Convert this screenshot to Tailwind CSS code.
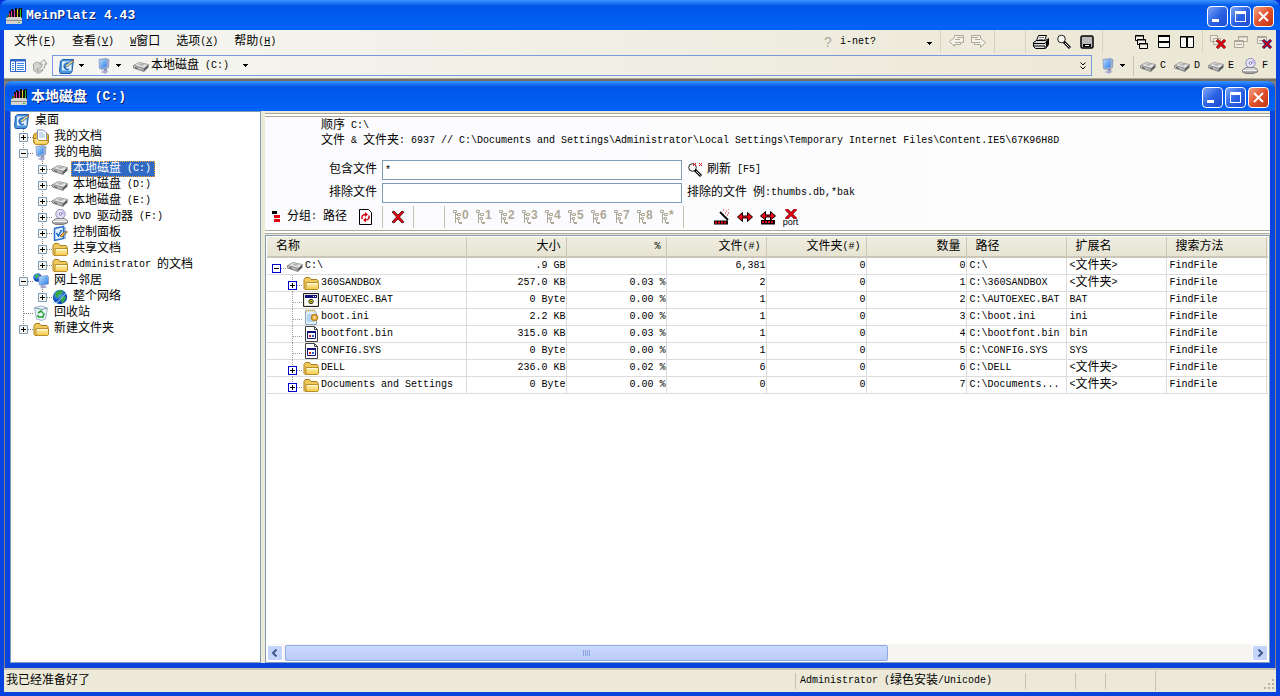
<!DOCTYPE html>
<html lang="zh-CN">
<head>
<meta charset="utf-8">
<title>MeinPlatz 4.43</title>
<script src="https://cdn.jsdelivr.net/npm/@tailwindcss/browser@4"></script>
</head>
<body class="min-h-screen bg-[#0831d9] font-['Liberation_Mono','Noto_Sans_CJK_SC',monospace] text-[10px] leading-4 text-black">
<svg class="absolute size-0" aria-hidden="true">
  <defs>
    <linearGradient id="gFolder" x1="0" y1="0" x2="0" y2="1"><stop offset="0" stop-color="#fff6b8"/><stop offset="1" stop-color="#f3c64a"/></linearGradient>
    <linearGradient id="gDrive" x1="0" y1="0" x2="0" y2="1"><stop offset="0" stop-color="#f2f2f2"/><stop offset="1" stop-color="#8a8a8a"/></linearGradient>
    <linearGradient id="gScreen" x1="0" y1="0" x2="1" y2="1"><stop offset="0" stop-color="#b9e2ff"/><stop offset="1" stop-color="#2878e8"/></linearGradient>
    <radialGradient id="gGlobe" cx=".4" cy=".3"><stop offset="0" stop-color="#6cc0ff"/><stop offset="1" stop-color="#0a48b8"/></radialGradient>
  </defs>
  <symbol id="app" viewBox="0 0 16 16"><path d="M1 7h2V3h2V1h2v1h2V0h2v1h2V0h3v10H1z" fill="#101010"/><path d="M2 7v4M14.500 1v9" stroke="#30c030"/><path d="M5.500 3v8M8.500 2v9" stroke="#e03aa8"/><path d="M11.500 1v10" stroke="#e8d020"/><path d="M3.500 5v6" stroke="#d83030"/><path d="M0 10l3-1h12l1 2v4l-1 1H0z" fill="#d4d4d0"/><path d="M0 12.500h16" stroke="#8c8c88"/><path d="M12 14h2v1h-2z" fill="#35b035"/></symbol>
  <symbol id="folder" viewBox="0 0 16 16"><path d="M1 4.500l1.500-2h4l1.500 2h6l1 1v8l-1 1H2l-1-1z" fill="#f0c95c" stroke="#a87e1c"/><path d="M3 7.500h12.500v6l-1 1H3z" fill="url(#gFolder)" stroke="#b98e28"/><path d="M4 8.500h10" stroke="#fffbe0"/></symbol>
  <symbol id="docs" viewBox="0 0 16 16"><path d="M.5 6l2-2h11l2 2v7l-2 2.500h-11l-2-2z" fill="#e8b838" stroke="#a87e1c"/><path d="M4.500 1h6l3 3v8h-9z" fill="#fff" stroke="#7890c0"/><path d="M6 4h4M6 6h6M6 8h6" stroke="#90b4e8"/><path d="M1 9.500h3l1.500 2H15v2l-1.500 2h-11L1 13z" fill="url(#gFolder)" stroke="#b98e28"/></symbol>
  <symbol id="drive" viewBox="0 0 16 16"><path d="M.5 7.500L6 4.500l9.500 2-4.500 4z" fill="#e4e4e4" stroke="#a0a0a0"/><path d="M.5 7.500l10.500 3v3L.5 10z" fill="url(#gDrive)" stroke="#8a8a8a"/><path d="M11 10.500l4.500-4v3l-4.500 4z" fill="#5e5e5e"/><path d="M5 6.500l3-1 4 1-3 1.500z" fill="#b4b4b4"/><path d="M2 9.500l3 1" stroke="#444"/></symbol>
  <symbol id="dvd" viewBox="0 0 16 16"><circle cx="8.500" cy="5" r="4.700" fill="#e4e2f6" stroke="#8e8eb0"/><path d="M8.500 5l3-3.500a4.500 4.500 0 0 1 1.500 4z" fill="#c8b4f0"/><circle cx="8.500" cy="5" r="1.300" fill="#fff" stroke="#8080b0"/><path d="M.5 12L4 9.500h8.500l3 2V14L11 15.500H3.500l-3-1.500z" fill="url(#gDrive)" stroke="#808080"/><path d="M1 12.500h14" stroke="#f6f6f6"/></symbol>
  <symbol id="pc" viewBox="0 0 16 16"><path d="M3 1.500l7-1 3 1-.5 8L6 11.500l-2.500-1z" fill="#9fb0d0" stroke="#8090c0" stroke-width=".7"/><path d="M3.500 2.500l7-1.200v7.500l-6 1.700z" fill="url(#gScreen)"/><path d="M8 11l3-1 .5 2.500-4 1z" fill="#8a90b8"/><path d="M4.500 14l4-1.500 4 1-3 2.200z" fill="#a9a9cf"/></symbol>
  <symbol id="desk" viewBox="0 0 16 16"><path d="M1.500 3l2-1.500h11L13 13.500l-1.500 2h-10l-1-2z" fill="#4a97dc" stroke="#1f5cae"/><path d="M3 3.500h9.500v9H3z" fill="#e4f2ff"/><path d="M10 5.500A3.200 3.200 0 1 0 10 11" fill="none" stroke="#1f6cc4" stroke-width="1.400"/><path d="M6 9.500l1-2.500 6-4.500 1.500 1.500-6 4.500z" fill="#ffe07a" stroke="#1c5cb0" stroke-width=".8"/><path d="M13 2.500l2-.5v2z" fill="#e84018"/></symbol>
  <symbol id="panel" viewBox="0 0 16 16"><path d="M2.500 3.500l9-2v12l-9 2z" fill="#e6f3ff" stroke="#2b6fca" stroke-width="1.500"/><path d="M4.500 8l2 3 3-6" fill="none" stroke="#1464c8" stroke-width="1.500"/><path d="M8 11l5-5 2.500 1L10 12z" fill="#f2b030" stroke="#7a4a10" stroke-width=".7"/><path d="M13 2v12" stroke="#4a86d4"/></symbol>
  <symbol id="net" viewBox="0 0 16 16"><circle cx="4.500" cy="4.500" r="4.200" fill="url(#gGlobe)"/><path d="M2 2l3-1 1 2-3 3z" fill="#3db44a"/><path d="M6 3.500l8.500-1L15.500 4v7L8 12.500l-2-1z" fill="url(#gScreen)" stroke="#8c9cc8" stroke-width=".8"/><path d="M9 12.500h3l2 2-5 1-2-1.500z" fill="#a4a4cc"/></symbol>
  <symbol id="globe" viewBox="0 0 16 16"><circle cx="8" cy="8" r="7.200" fill="url(#gGlobe)"/><path d="M4 3l4-2 3 1-1 3-3 1-1 3-3-2zM9 8l4-1 1 2-3 5-2-1z" fill="#35a845"/><path d="M1 14l5-1 8-9" stroke="#9fd4ff" fill="none"/></symbol>
  <symbol id="bin" viewBox="0 0 16 16"><path d="M1.500 2.500l7-1.500 6 2-2 11-4 1.500-5-1.500z" fill="#e9f3f6" stroke="#9cb4c4"/><path d="M2 3l7 1.500 5-1.500" fill="none" stroke="#7898b0"/><path d="M5 8l3-2 2 2M11 8l-1 4H8M4.500 10l1 2H8" fill="none" stroke="#25a035" stroke-width="1.600"/></symbol>
  <symbol id="bat" viewBox="0 0 16 16"><path d="M.5 1.500h15v13H.5z" fill="#e6e3d6" stroke="#202020"/><path d="M2 3h12v3H2z" fill="#10107c"/><path d="M10 4.500h3" stroke="#fff" stroke-dasharray="1 1"/><path d="M2 6h12v7H2z" fill="#fff"/><circle cx="8" cy="9.500" r="2.200" fill="#e8d820" stroke="#303030"/><circle cx="8" cy="9.500" r=".7"/></symbol>
  <symbol id="ini" viewBox="0 0 16 16"><path d="M2.500 1.500h9l2 3v11h-11z" fill="#dff0fc" stroke="#8ea8b8"/><path d="M3 1.500h9" stroke="#e8c050" stroke-width="2" stroke-dasharray="1 1"/><path d="M4 6h5M4 8h4M4 10h5M4 12h7" stroke="#86b8e0"/><circle cx="11.500" cy="8.500" r="3.200" fill="#f0b040" stroke="#a86a10"/><circle cx="11.500" cy="8.500" r="1" fill="#fff2c0"/></symbol>
  <symbol id="sys" viewBox="0 0 16 16"><path d="M2.500.5h9l3 3v12h-12z" fill="#fff" stroke="#404040"/><path d="M11.500.5v3h3" fill="none" stroke="#404040"/><path d="M4.500 5.500h8v7h-8z" fill="#fff" stroke="#10107c"/><path d="M4 6h9" stroke="#10107c" stroke-width="2"/><path d="M6 9h2v2H6z" fill="#d82020"/><path d="M9 9h2v2H9z" fill="#2060d8"/></symbol>
  <symbol id="cv" viewBox="0 0 19 16"><path d="M9.500 0v16" stroke="#808080" stroke-dasharray="1 1"/></symbol>
  <symbol id="ct" viewBox="0 0 19 16"><path d="M9.500 0v16M10 8.500h9" stroke="#808080" stroke-dasharray="1 1"/></symbol>
  <symbol id="ce" viewBox="0 0 19 16"><path d="M9.500 0v8M10 8.500h9" stroke="#808080" stroke-dasharray="1 1"/></symbol>
  <symbol id="bp" viewBox="0 0 19 16"><path d="M5.500 4.500h8v8h-8z" fill="#f6f4ec" stroke="#7b9ab8"/><path d="M7 8.500h5M9.500 6v5" stroke="#000"/></symbol>
  <symbol id="bm" viewBox="0 0 19 16"><path d="M5.500 4.500h8v8h-8z" fill="#f6f4ec" stroke="#7b9ab8"/><path d="M7 8.500h5" stroke="#000"/></symbol>
  <symbol id="gt" viewBox="0 0 16 17"><path d="M5.500 0v17M6 10.500h10" stroke="#a0a0a0" stroke-dasharray="1 1"/></symbol>
  <symbol id="gp" viewBox="0 0 16 17"><path d="M5.500 0v17M10 10.500h6" stroke="#a0a0a0" stroke-dasharray="1 1"/><rect x="1.500" y="6.500" width="8" height="8" fill="#fff" stroke="#0000d0"/><path d="M3 10.500h5M5.500 8v5" stroke="#000"/></symbol>
  <symbol id="gl" viewBox="0 0 16 17"><path d="M5.500 0v6M10 10.500h6" stroke="#a0a0a0" stroke-dasharray="1 1"/><rect x="1.500" y="6.500" width="8" height="8" fill="#fff" stroke="#0000d0"/><path d="M3 10.500h5M5.500 8v5" stroke="#000"/></symbol>
  <symbol id="gm" viewBox="0 0 16 17"><path d="M10 10.500h6" stroke="#a0a0a0" stroke-dasharray="1 1"/><rect x="1.500" y="6.500" width="8" height="8" fill="#fff" stroke="#0000d0"/><path d="M3 10.500h5" stroke="#000"/></symbol>
  <symbol id="down" viewBox="0 0 5 3"><path d="M0 0h5v1H4v1H3v1H2V2H1V1H0z"/></symbol>
  <symbol id="tr" viewBox="0 0 9 16"><path d="M2.500 1v13M3 5.500h2M3 9.500h2M5.500 11v2.500h2" stroke="#aca899" fill="none"/><path d="M.5 1.500h3v2h-3zM4.500 4.500h3v2h-3zM4.500 8.500h2v2h-2z" fill="#fff" stroke="#aca899"/><path d="M6 13h3v2H6z" fill="#aca899"/></symbol>
  <symbol id="cascade" viewBox="0 0 16 16" fill="#f4f2e8" stroke="#000"><path d="M2.500 1.500h8v5h-8z"/><path d="M2 2h9"/><path d="M4.500 5.500h8v5h-8z"/><path d="M4 6h9"/><path d="M6.500 9.500h8v5h-8z"/><path d="M6 10h9"/></symbol>
  <symbol id="gwin" viewBox="0 0 16 16"><path d="M5.500 2.500h9v5h-9zM1.500 6.500h9v7h-9z" fill="#f0eee2" stroke="#aca899"/><path d="M5 3h10M1 7.500h10M3 10.500h6" stroke="#aca899"/></symbol>
  <symbol id="redx" viewBox="0 0 16 16"><path d="M2 3l2-1 4 4 4-4 2 1-4.500 5L14 13l-2 1-4-4-4 4-2-1 4.500-5z" fill="#e00010" stroke="#300" stroke-width=".7"/></symbol>
</svg>

<div class="flex min-h-screen flex-col rounded-t-lg border-x-4 border-b-4 border-[#0a44de]">
  <header class="-mx-1 flex h-[30px] items-center justify-between rounded-t-lg bg-linear-to-b from-[#3a94ff] via-[#0056e8] via-20% to-[#0062f8] pr-1.5 pl-1.5 pt-0.5 text-white">
    <h1 class="flex items-center gap-1 text-[13px] font-bold [text-shadow:1px_1px_#0a1e6e]"><svg class="size-4"><use href="#app"/></svg>MeinPlatz 4.43</h1>
    <div class="flex gap-0.5">
      <button aria-label="最小化" class="flex size-[21px] items-end rounded-sm border border-white bg-linear-to-br from-[#7ea6f8] via-[#2c62e4] to-[#1c4cd0] p-1"><span class="h-[3px] w-[7px] bg-white"></span></button>
      <button aria-label="最大化" class="size-[21px] rounded-sm border border-white bg-linear-to-br from-[#7ea6f8] via-[#2c62e4] to-[#1c4cd0] p-1"><span class="block size-[11px] border border-t-[3px] border-white"></span></button>
      <button aria-label="关闭" class="size-[21px] rounded-sm border border-white bg-linear-to-br from-[#f0a080] via-[#e2502c] to-[#c03410] p-1"><svg class="size-[11px]" viewBox="0 0 11 11"><path d="M1 1l9 9M10 1l-9 9" stroke="#fff" stroke-width="2"/></svg></button>
    </div>
  </header>

  <div class="flex h-[23px] items-center justify-between bg-linear-to-r from-[#f6f6f3] to-[#ebe7d4]">
    <nav class="flex gap-4 pl-2.5">
      <button>文件(<u>F</u>)</button><button>查看(<u>V</u>)</button><button><u>W</u>窗口</button><button>选项(<u>X</u>)</button><button>帮助(<u>H</u>)</button>
    </nav>
    <div class="flex h-full items-center pr-px">
      <label for="inet" class="w-3 text-center font-['Liberation_Sans',sans-serif] text-[14px] text-[#aca899]">?</label>
      <div class="relative w-[102px]">
        <select id="inet" class="w-full appearance-none bg-transparent pl-1.5"><option>i-net?</option></select>
        <svg class="pointer-events-none absolute top-2 right-1 h-[3px] w-[5px]"><use href="#down"/></svg>
      </div>
      <span class="h-full w-2 bg-linear-to-r from-transparent from-50% via-[#c5c2b2] via-50% to-transparent to-65%"></span>
      <button aria-label="后退" class="flex w-[23px] justify-center"><svg class="size-4" viewBox="0 0 16 16" fill="#f4f2e8" stroke="#aca899"><path d="M6.500 1.500h9v7h-3v2h-6v2l-5-5 5-4z"/><path d="M7 5.500h5M7 8.500h5M9 3.500h6"/></svg></button>
      <button aria-label="前进" class="flex w-[23px] justify-center"><svg class="size-4" viewBox="0 0 16 16" fill="#f4f2e8" stroke="#aca899"><path d="M9.500 1.500h-9v7h3v2h6v3l5-5-5-4z"/><path d="M9 5.500H4M9 8.500H4M7 3.500H1"/></svg></button>
      <span class="h-full w-2 bg-linear-to-r from-transparent from-50% via-[#c5c2b2] via-50% to-transparent to-65%"></span>
      <span class="w-[23px]"></span>
      <span class="h-full w-2 bg-linear-to-r from-transparent from-50% via-[#c5c2b2] via-50% to-transparent to-65%"></span>
      <button aria-label="打印" class="flex w-[23px] justify-center"><svg class="size-4" viewBox="0 0 16 16"><path d="M5.500 1.500h8l-2 5h-8z" fill="#fff" stroke="#000"/><path d="M6 3.500h5M5.500 5.500h5" stroke="#777"/><path d="M.5 8.500l3-2h9l3-2v6l-3 4H2.500l-2-2z" fill="#ddd" stroke="#000"/><path d="M1 9.500h11l3-4M1 12h11v2" fill="none" stroke="#000"/><path d="M13 8l3-3v5l-3 4z"/></svg></button>
      <button aria-label="搜索" class="flex w-[23px] justify-center"><svg class="size-4" viewBox="0 0 16 16"><circle cx="5.500" cy="5" r="3.800" fill="#f6f6f2" stroke="#222"/><path d="M8 8l6 6" stroke="#000" stroke-width="3"/><path d="M9 9l4.500 4.500" stroke="#ddd"/></svg></button>
      <button aria-label="窗口" class="flex w-[23px] justify-center"><svg class="size-4" viewBox="0 0 16 16"><rect x="2" y="2" width="12" height="12" rx="1.500" fill="#bbb" stroke="#000" stroke-width="1.500"/><path d="M4 10h8v3H4z"/><path d="M6 11.500h4" stroke="#fff"/></svg></button>
      <span class="h-full w-2 bg-linear-to-r from-transparent from-50% via-[#c5c2b2] via-50% to-transparent to-65%"></span>
      <span class="w-[23px]"></span>
      <button aria-label="层叠" class="flex w-[23px] justify-center"><svg class="size-4"><use href="#cascade"/></svg></button>
      <button aria-label="水平平铺" class="flex w-[23px] justify-center"><svg class="size-4" viewBox="0 0 16 16" fill="#f8f8f4" stroke="#000"><path d="M2.500 1.500h11v12h-11z"/><path d="M2 2h12M2 8h12" stroke-width="2"/></svg></button>
      <button aria-label="垂直平铺" class="flex w-[23px] justify-center"><svg class="size-4" viewBox="0 0 16 16" fill="#f8f8f4" stroke="#000"><path d="M1.500 2.500h6v11h-6zM8.500 2.500h6v11h-6z"/><path d="M1 3h14"/></svg></button>
      <span class="h-full w-2 bg-linear-to-r from-transparent from-50% via-[#c5c2b2] via-50% to-transparent to-65%"></span>
      <button aria-label="全部关闭" class="flex w-[23px] justify-center"><svg class="size-4" viewBox="0 0 16 16"><path d="M.5 1.500h7v6h-7zM3.500 4.500h7v6h-7z" fill="#f0eee2" stroke="#aca899"/><path d="M7 6l8 8M15 6l-8 8" stroke="#600" stroke-width="3"/><path d="M7 6l8 8M15 6l-8 8" stroke="#e00010" stroke-width="1.800"/></svg></button>
      <button aria-label="还原" class="flex w-[23px] justify-center"><svg class="size-4"><use href="#gwin"/></svg></button>
      <button aria-label="关闭窗口" class="flex w-[23px] justify-center"><svg class="size-4" viewBox="0 0 16 16"><path d="M1.500 2.500h9v7h-9z" fill="#f0eee2" stroke="#aca899"/><path d="M1 3.500h9M3 6.500h5" stroke="#aca899"/><path d="M7 6l8 8M15 6l-8 8" stroke="#00007c" stroke-width="3"/><path d="M7 6l8 8M15 6l-8 8" stroke="#e00010" stroke-width="1.500"/></svg></button>
    </div>
  </div>

  <div class="flex h-[26px] items-center border-b border-[#aca899] bg-linear-to-r from-[#f6f6f3] to-[#ebe7d4]">
    <button aria-label="列表" class="ml-1.5"><svg class="size-4" viewBox="0 0 16 16"><path d="M.5 1.500h15v12H.5z" fill="#fff" stroke="#2a66c8"/><path d="M1 2.500h14" stroke="#2a66c8" stroke-width="2"/><path d="M5.500 3v10" stroke="#2a66c8"/><path d="M2 5.500h2M2 7.500h2M2 9.500h2M2 11.500h2M7 5.500h7M7 7.500h7M7 9.500h7M7 11.500h7" stroke="#3c8ae0"/></svg></button>
    <button aria-label="向上" class="ml-1.5"><svg class="size-4" viewBox="0 0 16 16"><path d="M1.500 6l3-2 6 2v7l-4 2.500-5-3z" fill="#d4d4d0" stroke="#a4a4a0"/><path d="M5 11c4 0 5-2 5-5H7.500L12 1.500 15 6h-2c0 5-3 7-8 7z" fill="#eee" stroke="#999"/></svg></button>
    <div class="ml-1 flex h-[21px] min-w-0 flex-1 items-center border border-[#7a98e0] pl-1.5">
      <button class="flex items-center gap-1" aria-label="桌面"><svg class="size-4"><use href="#desk"/></svg><svg class="h-[3px] w-[5px]"><use href="#down"/></svg></button>
      <button class="ml-3 flex items-center gap-1" aria-label="我的电脑"><svg class="size-4"><use href="#pc"/></svg><svg class="h-[3px] w-[5px]"><use href="#down"/></svg></button>
      <button class="ml-3 flex items-center gap-0.5 whitespace-pre"><svg class="size-4"><use href="#drive"/></svg><span>本地磁盘 (C:)</span><svg class="ml-3 h-[3px] w-[5px]"><use href="#down"/></svg></button>
      <button class="mr-1 ml-auto" aria-label="更多"><svg class="h-2 w-2" viewBox="0 0 8 8" fill="none" stroke="#000"><path d="M1.500 0.500L4 3l2.500-2.500M1.500 4.500L4 7l2.500-2.500"/></svg></button>
    </div>
    <button class="ml-2 flex items-center gap-1" aria-label="我的电脑"><svg class="size-4"><use href="#pc"/></svg><svg class="h-[3px] w-[5px]"><use href="#down"/></svg></button>
    <span class="mr-1.5 ml-2 h-5 w-px bg-[#c5c2b2]"></span>
    <div class="flex gap-2 pr-2">
      <button class="flex w-[26px] items-center justify-between"><svg class="size-4"><use href="#drive"/></svg>C</button>
      <button class="flex w-[26px] items-center justify-between"><svg class="size-4"><use href="#drive"/></svg>D</button>
      <button class="flex w-[26px] items-center justify-between"><svg class="size-4"><use href="#drive"/></svg>E</button>
      <button class="flex w-[26px] items-center justify-between"><svg class="size-4"><use href="#dvd"/></svg>F</button>
    </div>
  </div>

  <main class="flex flex-1 flex-col border-t-2 border-[#716f64] bg-[#808080] pr-px pl-px">
    <section class="flex flex-1 flex-col rounded-t-lg bg-[#0a44de] px-[5px] pb-[5px]">
      <header class="-mx-[5px] flex h-[30px] items-center justify-between rounded-t-lg bg-linear-to-b from-[#3a94ff] via-[#0056e8] via-20% to-[#0062f8] pt-0.5 pr-1.5 pl-1.5 text-white">
        <h2 class="flex items-center gap-1 text-[13px] font-bold whitespace-pre [text-shadow:1px_1px_#0a1e6e]"><svg class="size-4"><use href="#app"/></svg><span data-title>本地磁盘 (C:)</span></h2>
        <div class="flex gap-0.5">
          <button aria-label="最小化" class="flex size-[21px] items-end rounded-sm border border-white bg-linear-to-br from-[#7ea6f8] via-[#2c62e4] to-[#1c4cd0] p-1"><span class="h-[3px] w-[7px] bg-white"></span></button>
          <button aria-label="最大化" class="size-[21px] rounded-sm border border-white bg-linear-to-br from-[#7ea6f8] via-[#2c62e4] to-[#1c4cd0] p-1"><span class="block size-[11px] border border-t-[3px] border-white"></span></button>
          <button aria-label="关闭" class="size-[21px] rounded-sm border border-white bg-linear-to-br from-[#f0a080] via-[#e2502c] to-[#c03410] p-1"><svg class="size-[11px]" viewBox="0 0 11 11"><path d="M1 1l9 9M10 1l-9 9" stroke="#fff" stroke-width="2"/></svg></button>
        </div>
      </header>

      <div class="flex flex-1 bg-[#ece9d8]">
        <aside class="w-[251px] shrink-0 border border-[#7f9db9] bg-white pt-px pl-[3px]">
          <ul id="tree"></ul>
        </aside>
        <div class="ml-1 flex min-w-0 flex-1 flex-col">
          <div class="mt-0.5 h-1 border-y border-[#aca899] bg-white"></div>
          <div class="flex flex-col bg-linear-to-r from-[#fbfbfe] to-[#fdfdfd] pb-0.5">
            <div class="h-[43px] pt-px pl-14">
              <p class="h-[15px] whitespace-pre">顺序 C:\</p>
              <p class="whitespace-pre">文件 &amp; 文件夹: 6937 // C:\Documents and Settings\Administrator\Local Settings\Temporary Internet Files\Content.IE5\67K96H8D</p>
            </div>
            <div class="grid grid-cols-[112px_300px_1fr] items-center gap-x-[5px] gap-y-[3px]">
              <label for="inc" class="text-right">包含文件</label>
              <input id="inc" value="*" class="h-5 border border-[#7f9db9] bg-white px-0.5">
              <button class="flex items-center gap-1 whitespace-pre"><svg class="size-4" viewBox="0 0 16 16"><circle cx="5.500" cy="5.500" r="3.800" fill="#f6f6f2" stroke="#222"/><path d="M8 8l6 6" stroke="#000" stroke-width="3"/><path d="M9 9l4.500 4.500" stroke="#ddd"/><path d="M6 1l3 3M9 1L6 4M12 1l3 3M15 1l-3 3" stroke="#e00010"/></svg><span>刷新 [F5]</span></button>
              <label for="exc" class="text-right">排除文件</label>
              <input id="exc" class="h-5 border border-[#7f9db9] bg-white px-0.5">
              <span class="whitespace-pre">排除的文件 例:thumbs.db,*bak</span>
            </div>
            <div class="mt-[3px] flex h-[22px] items-center pl-[7px]">
              <svg class="mr-[7px] h-3 w-2" viewBox="0 0 8 12"><path d="M0 0h5v3H0z"/><path d="M2 4h6v3H2zM2 8h6v3H2z" fill="#e00010"/></svg>
              <span class="whitespace-pre">分组: 路径</span>
              <button aria-label="刷新分组" class="mr-2 ml-[11px]"><svg class="size-4" viewBox="0 0 16 16"><path d="M1.500.5h9l3 3v12h-12z" fill="#fff" stroke="#000"/><path d="M4 10c-.5-3 .5-4.500 4-4.500M11 6.500c.5 3-.5 4.500-4 4.500" fill="none" stroke="#d00010" stroke-width="1.500"/><path d="M7 3l3 2.500L7 8zM8 8.500v5L5 11z" fill="#d00010"/></svg></button>
              <span class="h-full w-px bg-[#c5c2b2]"></span>
              <button aria-label="删除" class="mx-[7px]"><svg class="size-4"><use href="#redx"/></svg></button>
              <span class="h-full w-px bg-[#c5c2b2]"></span>
              <span class="w-[30px]"></span>
              <span class="h-full w-px bg-[#c5c2b2]"></span>
              <div id="levels" class="flex px-1"></div>
              <span class="mr-[26px] h-full w-px bg-[#c5c2b2]"></span>
              <button aria-label="自动宽度" class="flex w-[23px] justify-center"><svg class="size-4" viewBox="0 0 16 16"><path d="M6 3l8 8" stroke="#000" stroke-width="1.800"/><path d="M9 1h1M12 2h1M14 4h1M11 4h1M14 0h1M13 6h1" stroke="#e00010"/><path d="M0 11.500h14v4H0z"/><path d="M1 13.500h12" stroke="#f00010" stroke-width="2" stroke-dasharray="2 1"/></svg></button>
              <button aria-label="列宽" class="flex w-[23px] justify-center"><svg class="size-4" viewBox="0 0 16 16"><path d="M.5 8l5-4.500V7h5V3.500l5 4.500-5 4.500V9h-5v3.500z" fill="#f00010" stroke="#000"/></svg></button>
              <button aria-label="全部列宽" class="flex w-[23px] justify-center"><svg class="size-4" viewBox="0 0 16 16"><path d="M.5 7l5-4.500V6h5V2.500l5 4.500-5 4V8h-5v3z" fill="#f00010" stroke="#000"/><path d="M1 11h14v4.500H1z"/><path d="M2 13h12" stroke="#f00010" stroke-width="2" stroke-dasharray="2 1"/></svg></button>
              <button aria-label="port" class="flex w-[23px] flex-col items-center"><svg class="h-[10px] w-4" viewBox="0 0 16 10"><path d="M3 0l10 10M13 0L3 10" stroke="#400" stroke-width="3"/><path d="M3 0l10 10M13 0L3 10" stroke="#f00010" stroke-width="1.800"/></svg><span class="font-['Liberation_Sans',sans-serif] text-[9px] leading-[6px]">port</span></button>
            </div>
          </div>
          <div class="mb-px h-1 border-y border-[#aca899] bg-white"></div>

          <div class="flex flex-1 flex-col border border-[#7f9db9] bg-white p-px">
            <div class="flex-1 overflow-hidden">
              <table class="w-full table-fixed border-collapse whitespace-pre">
                <colgroup><col class="w-[199px]"><col class="w-[100px]"><col class="w-[100px]"><col class="w-[100px]"><col class="w-[100px]"><col class="w-[100px]"><col class="w-[100px]"><col class="w-[100px]"><col class="w-[100px]"><col></colgroup>
                <thead class="bg-linear-to-b from-[#efede0] to-[#e6e3d2]">
                  <tr id="head" class="h-5 border-b-2 border-[#cbc7b8]"></tr>
                </thead>
                <tbody id="rows"></tbody>
              </table>
            </div>
            <div class="flex h-[17px] items-center bg-[#f6f5f1]">
              <button aria-label="向左" class="flex size-4 items-center justify-center rounded-xs border border-white bg-[#c4d4fb]"><svg class="size-2" viewBox="0 0 8 8"><path d="M5.500 0.500L2 4l3.500 3.500" fill="none" stroke="#3f5988" stroke-width="2"/></svg></button>
              <div class="flex h-4 flex-1 px-0.5"><div class="flex h-full w-5/8 items-center justify-center gap-px rounded-xs border border-[#8fa8e6] bg-linear-to-b from-[#cbd9fd] to-[#b8cbf8]"><i class="h-1.5 w-px bg-[#8ba3df]"></i><i class="h-1.5 w-px bg-[#8ba3df]"></i><i class="h-1.5 w-px bg-[#8ba3df]"></i><i class="h-1.5 w-px bg-[#8ba3df]"></i></div></div>
              <button aria-label="向右" class="flex size-4 items-center justify-center rounded-xs border border-white bg-[#c4d4fb]"><svg class="size-2" viewBox="0 0 8 8"><path d="M2.500 0.500L6 4 2.500 7.500" fill="none" stroke="#3f5988" stroke-width="2"/></svg></button>
            </div>
          </div>
        </div>
      </div>
    </section>
  </main>

  <footer class="flex h-6 items-center border-t-2 border-[#c9c6b8] bg-[#ece9d8]">
    <span class="flex-1 pl-0.5">我已经准备好了</span>
    <span class="w-[230px] border-l border-[#c5c2b2] pl-1">Administrator (绿色安装/Unicode)</span>
    <span class="h-4 w-[50px] border-l border-[#c5c2b2]"></span>
    <span class="h-4 w-[30px] border-l border-[#c5c2b2]"></span>
    <span class="h-4 w-[50px] border-l border-[#c5c2b2]"></span>
    <span class="flex h-5 w-[121px] items-end justify-end border-l border-[#c5c2b2]"><svg class="size-3" viewBox="0 0 12 12" fill="#b8b4a2"><path d="M8 0h2v2H8zM4 4h2v2H4zM8 4h2v2H8zM0 8h2v2H0zM4 8h2v2H4zM8 8h2v2H8z"/></svg></span>
  </footer>
</div>

<script>
const cell = id => `<svg class="h-4 w-[19px] shrink-0"><use href="#${id}"/></svg>`;
const box = (line, b) => `<svg class="h-4 w-[19px] shrink-0"><use href="#${line}"/><use href="#${b}"/></svg>`;
const tree = [
  ['', 'desk', '桌面'],
  [box('ct','bp'), 'docs', '我的文档'],
  [box('ct','bm'), 'pc', '我的电脑'],
  [cell('cv') + box('ct','bp'), 'drive', '本地磁盘 (C:)', true],
  [cell('cv') + box('ct','bp'), 'drive', '本地磁盘 (D:)'],
  [cell('cv') + box('ct','bp'), 'drive', '本地磁盘 (E:)'],
  [cell('cv') + box('ct','bp'), 'dvd', 'DVD 驱动器 (F:)'],
  [cell('cv') + box('ct','bp'), 'panel', '控制面板'],
  [cell('cv') + box('ct','bp'), 'folder', '共享文档'],
  [cell('cv') + box('ce','bp'), 'folder', 'Administrator 的文档'],
  [box('ct','bm'), 'net', '网上邻居'],
  [cell('cv') + box('ce','bp'), 'globe', '整个网络'],
  [cell('ct'), 'bin', '回收站'],
  [box('ce','bp'), 'folder', '新建文件夹'],
];
document.getElementById('tree').innerHTML = tree.map(([lead, icon, name, sel]) =>
  `<li class="flex h-4 items-center whitespace-pre">${lead}<svg class="mr-[3px] size-4 shrink-0"><use href="#${icon}"/></svg><span class="${sel ? 'bg-[#316ac5] pr-1 pl-0.5 text-white outline-1 -outline-offset-1 outline-dotted outline-[#f0a030]' : 'px-0.5'}">${name}</span></li>`).join('');

document.getElementById('levels').innerHTML = [...'012345678*'].map(n =>
  `<button class="flex w-[23px] items-start pl-1 font-['Liberation_Sans',sans-serif] text-[12px] leading-3 font-bold text-[#aca899]"><svg class="h-4 w-[9px]"><use href="#tr"/></svg>${n}</button>`).join('');

const right = i => i >= 1 && i <= 5;
document.getElementById('head').innerHTML = ['名称','大小','%','文件(#)','文件夹(#)','数量','路径','扩展名','搜索方法',''].map((h, i) =>
  `<th class="${i === 9 ? 'p-0' : right(i) ? 'border-r border-[#cbc7b8] py-0 pr-[5px] text-right font-normal' : 'border-r border-[#cbc7b8] py-0 pl-[9px] text-left font-normal'}">${h}</th>`).join('');

const D = '<文件夹>', F = 'FindFile';
const data = [
  [['gm'],'drive','C:\\','.9 GB','','6,381','0','0','C:\\',D],
  [['gp'],'folder','360SANDBOX','257.0 KB','0.03 %','2','0','1','C:\\360SANDBOX',D],
  [['gt'],'bat','AUTOEXEC.BAT','0 Byte','0.00 %','1','0','2','C:\\AUTOEXEC.BAT','BAT'],
  [['gt'],'ini','boot.ini','2.2 KB','0.00 %','1','0','3','C:\\boot.ini','ini'],
  [['gt'],'sys','bootfont.bin','315.0 KB','0.03 %','1','0','4','C:\\bootfont.bin','bin'],
  [['gt'],'sys','CONFIG.SYS','0 Byte','0.00 %','1','0','5','C:\\CONFIG.SYS','SYS'],
  [['gp'],'folder','DELL','236.0 KB','0.02 %','6','0','6','C:\\DELL',D],
  [['gl'],'folder','Documents and Settings','0 Byte','0.00 %','0','0','7','C:\\Documents...',D],
];
const esc = s => s.replace(/</g, '&lt;').replace(/>/g, '&gt;');
document.getElementById('rows').innerHTML = data.map(([[g], icon, name, ...rest], r) =>
  `<tr class="h-[17px] border-b border-[#dcdcdc]"><td class="border-r border-[#dcdcdc] p-0"><div class="flex h-4 items-center ${r ? 'pl-5' : 'pl-1'}"><svg class="h-[17px] w-4 shrink-0"><use href="#${g}"/></svg><svg class="mr-0.5 size-4 shrink-0"><use href="#${icon}"/></svg>${name}</div></td>` +
  [...rest, F].map((v, k) => `<td class="${right(k + 1) ? 'border-r border-[#dcdcdc] p-0 text-right' : 'border-r border-[#dcdcdc] py-0 pr-0 pl-[3px]'}">${esc(v)}</td>`).join('') + '<td class="p-0"></td></tr>').join('');

// Han text is set two pixels larger than the Latin text beside it, so that it takes two Latin columns
const walker = document.createTreeWalker(document.body, NodeFilter.SHOW_TEXT);
const found = [];
while (walker.nextNode()) {
  const n = walker.currentNode;
  if (/[\u4e00-\u9fff]/.test(n.data) && !n.parentElement.closest('script')) found.push(n);
}
for (const n of found) {
  const size = n.parentElement.hasAttribute('data-title') ? 'align-[-1px] text-[14px] leading-none' : 'align-[-1px] text-[12px] leading-none';
  const parts = n.data.split(/([\u4e00-\u9fff]+)/).filter(Boolean).map(p => {
    if (!/[\u4e00-\u9fff]/.test(p)) return document.createTextNode(p);
    const s = document.createElement('span');
    s.className = size;
    s.textContent = p;
    return s;
  });
  const wrap = document.createElement('span');
  wrap.append(...parts);
  n.replaceWith(wrap);
}
</script>
</body>
</html>
